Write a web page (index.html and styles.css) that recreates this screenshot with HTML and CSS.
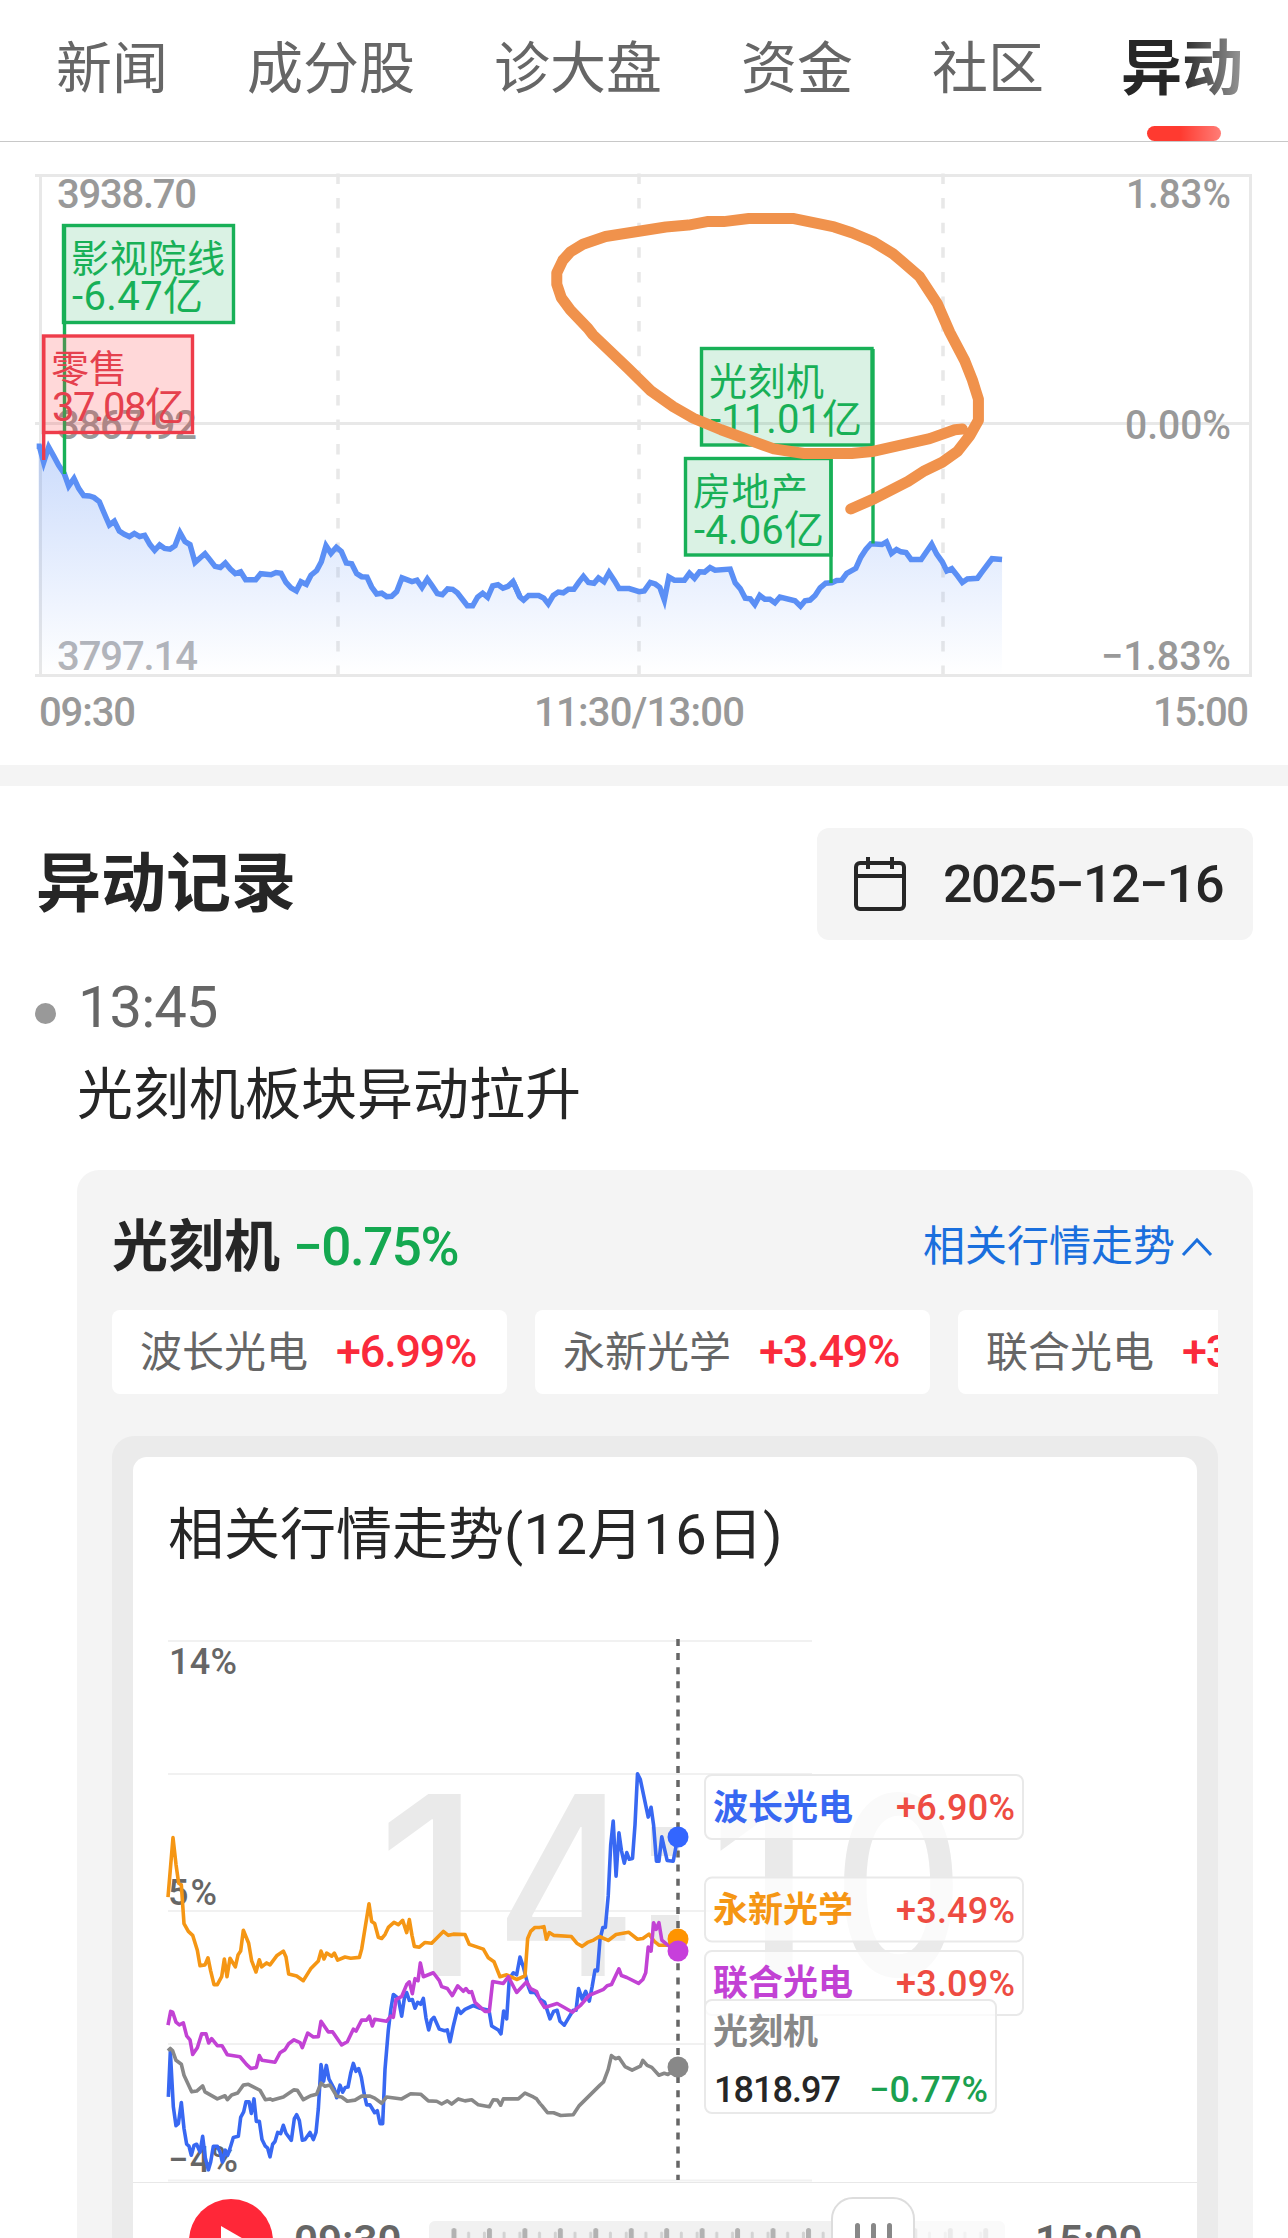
FILE: index.html
```html
<!DOCTYPE html>
<html lang="zh-CN">
<head>
    <meta charset="UTF-8">
    <title>异动</title>
    <link rel="stylesheet" href="styles.css">
</head>
<body>
    <nav class="tabs">
        <span class="tab">新闻</span>
        <span class="tab">成分股</span>
        <span class="tab">诊大盘</span>
        <span class="tab">资金</span>
        <span class="tab">社区</span>
        <span class="tab active">异动</span>
    </nav>

    <svg class="index-chart" viewBox="0 142 1288 623">
        <defs>
            <linearGradient id="area" gradientUnits="userSpaceOnUse" x1="0" y1="740" x2="0" y2="1345">
                <stop offset="0" stop-color="#5b8ff5" stop-opacity=".32"/>
                <stop offset="1" stop-color="#5b8ff5" stop-opacity="0"/>
            </linearGradient>
        </defs>
        <g class="frame">
            <path d="M35 175.5H1252M35 423.5H1252M35 675.5H1252M40.5 175V676M1250.5 175V676"/>
            <path class="dash" d="M338 173.500V676M639 173.500V676M943 173.500V676"/>
        </g>
        <g class="axis">
            <text x="57" y="208" textLength="140">3938.70</text>
            <text x="57" y="438.500" textLength="140">3867.92</text>
            <text x="57" y="670" textLength="141" class="low">3797.14</text>
            <text x="1126" y="208" textLength="105" lengthAdjust="spacingAndGlyphs">1.83%</text>
            <text x="1125" y="438.500" textLength="106" lengthAdjust="spacingAndGlyphs">0.00%</text>
            <text x="1101" y="670" textLength="130" lengthAdjust="spacingAndGlyphs">−1.83%</text>
            <text x="39" y="725.500" textLength="97">09:30</text>
            <text x="534" y="725.500" textLength="211">11:30/13:00</text>
            <text x="1153" y="725.500" textLength="96">15:00</text>
        </g>

        <!-- index line, morning and afternoon part -->
        <g transform="translate(0 160) scale(.33333 .38265)">
            <path fill="url(#area)" d="M116 748L131 790 146 750 193 820 206 852 222 832 236 858 251 877 268 878 282 882 298 893 312 922 328 954 343 944 358 970 373 978 388 984 403 976 419 984 434 981 450 1005 464 1020 479 1006 494 1015 510 1017 525 1008 540 974 555 997 570 1005 585 1052 600 1040 615 1029 630 1045 645 1062 661 1065 676 1053 691 1069 706 1081 722 1076 737 1097 767 1097 782 1081 813 1084 828 1078 843 1080 858 1104 873 1118 889 1126 903 1102 919 1109 933 1085 950 1073 964 1050 978 1008 993 1028 1009 1012 1024 1023 1039 1053 1055 1055 1070 1081 1085 1089 1101 1090 1115 1116 1130 1134 1145 1132 1160 1141 1175 1140 1190 1128 1206 1092 1236 1102 1251 1098 1266 1117 1282 1095 1296 1112 1312 1133 1327 1136 1343 1121 1358 1122 1372 1131 1387 1148 1402 1165 1418 1165 1433 1142 1448 1132 1463 1143 1478 1113 1494 1110 1509 1119 1524 1114 1539 1102 1560 1142V1345H116Z"/>
            <polyline class="index-line" points="110,748 118,748 131,790 146,750 162,775 176,798 193,820 206,852 222,832 236,858 251,877 268,878 282,882 298,893 312,922 328,954 343,944 358,970 373,978 388,984 403,976 419,984 434,981 450,1005 464,1020 479,1006 494,1015 510,1017 525,1008 540,974 555,997 570,1005 585,1052 600,1040 615,1029 630,1045 645,1062 661,1065 676,1053 691,1069 706,1081 722,1076 737,1097 767,1097 782,1081 813,1084 828,1078 843,1080 858,1104 873,1118 889,1126 903,1102 919,1109 933,1085 950,1073 964,1050 978,1008 993,1028 1009,1012 1024,1023 1039,1053 1055,1055 1070,1081 1085,1089 1101,1090 1115,1116 1130,1134 1145,1132 1160,1141 1175,1140 1190,1128 1206,1092 1236,1102 1251,1098 1266,1117 1282,1095 1296,1112 1312,1133 1327,1136 1343,1121 1358,1122 1372,1131 1387,1148 1402,1165 1418,1165 1433,1142 1448,1132 1463,1143 1478,1113 1494,1110 1509,1119 1524,1114 1539,1102 1560,1142"/>
        </g>
        <g transform="translate(500 160) scale(.50254 .38265)">
            <path fill="url(#area)" d="M39.8 1142L47 1150 57 1138 77 1138 87 1145 96 1160 106 1138 116 1129 126 1131 136 1122 147 1122 157 1103 166 1088 176 1104 187 1106 196 1092 207 1102 217 1078 228 1100 237 1120 257 1120 277 1128 287 1126 299 1104 318 1117 327 1150 336 1090 347 1098 367 1098 377 1080 387 1093 397 1076 418 1065 458 1069 468 1105 478 1120 488 1145 507 1162 517 1138 527 1148 537 1148 547 1157 557 1142 587 1152 598 1166 617 1150 637 1118 648 1106 680 1098 690 1080 708 1067 718 1038 738 1003 760 1005 769 998 779 1028 789 1018 808 1026 818 1044 838 1044 859 1004 889 1074 899 1068 920 1104 930 1095 950 1093 979 1042 999 1044V1345H39.8Z"/>
            <polyline class="index-line" points="26,1102 39.800,1142 47,1150 57,1138 77,1138 87,1145 96,1160 106,1138 116,1129 126,1131 136,1122 147,1122 157,1103 166,1088 176,1104 187,1106 196,1092 207,1102 217,1078 228,1100 237,1120 257,1120 277,1128 287,1126 299,1104 309,1108 318,1117 327,1150 336,1090 347,1098 367,1098 377,1080 387,1093 397,1076 407,1077 418,1065 428,1072 458,1069 468,1105 478,1120 488,1145 498,1147 507,1162 517,1138 527,1148 537,1148 547,1157 557,1142 587,1152 598,1166 607,1152 617,1150 627,1138 637,1118 648,1106 660,1105 670,1099 680,1098 690,1080 708,1067 718,1038 728,1018 738,1003 760,1005 769,998 779,1028 789,1018 798,1024 808,1026 818,1044 838,1044 859,1004 869,1030 880,1050 889,1074 899,1068 910,1086 920,1104 930,1095 950,1093 960,1075 979,1042 999,1044"/>
        </g>

        <g class="flag down">
            <path class="pole" d="M64.500 225V474"/>
            <rect x="63.500" y="225.500" width="170" height="97"/>
            <text x="71" y="272" textLength="154">影视院线</text>
            <text x="72" y="310" textLength="131">-6.47亿</text>
        </g>
        <g class="flag up">
            <path class="pole" d="M43.700 335V460"/>
            <rect x="43.500" y="336" width="149" height="96.500"/>
            <text x="51" y="382" textLength="76">零售</text>
            <text x="52" y="421" textLength="133">37.08亿</text>
        </g>
        <g class="flag down">
            <path class="pole" d="M873 349V543.500"/>
            <rect x="701.500" y="348.500" width="170.500" height="96.500"/>
            <text x="709" y="395" textLength="115">光刻机</text>
            <text x="710" y="432.500" textLength="152">-11.01亿</text>
        </g>
        <g class="flag down">
            <path class="pole" d="M831 458V583"/>
            <rect x="685.500" y="458.500" width="145.500" height="96.500"/>
            <text x="693" y="505" textLength="115">房地产</text>
            <text x="694" y="544" textLength="130">-4.06亿</text>
        </g>

        <!-- hand drawn marker -->
        <polyline class="marker" transform="translate(500 160) scale(.50254 .38265)" points="698,912 745,885 812,840 845,812 880,790 910,762 935,720 952,680 952,625 946,600 940,575 925,525 895,450 870,375 835,305 800,265 782,245 742,213 700,190 665,175 585,153 495,153 445,161 412,161 375,170 330,175 210,200 165,220 140,240 125,262 113,295 113,325 122,360 140,392 175,440 185,457 255,545 300,603 345,645 385,675 440,705 545,755 605,767 700,767 740,762 855,728 905,705 920,703"/>
    </svg>

    <section class="records">
        <header class="records-head">
            <h2>异动记录</h2>
            <div class="date">
                <svg class="calendar" viewBox="0 0 52 54">
                    <rect x="2" y="6" width="48" height="46" rx="4"/>
                    <path d="M2 19H50M14 0V12M38 0V12"/>
                </svg>
                <span>2025−12−16</span>
            </div>
        </header>

        <div class="time"><i class="dot"></i><span>13:45</span></div>
        <p class="headline">光刻机板块异动拉升</p>

        <div class="card">
            <div class="card-head">
                <b>光刻机</b>
                <span class="rate green">−0.75%</span>
                <a class="toggle">相关行情走势<svg viewBox="0 0 32 20"><path d="M2 18L16 3L30 18"/></svg></a>
            </div>
            <div class="chips">
                <div class="chip"><span>波长光电</span><em>+6.99%</em></div>
                <div class="chip"><span>永新光学</span><em>+3.49%</em></div>
                <div class="chip"><span>联合光电</span><em>+3.09%</em></div>
            </div>

            <div class="panel">
                <div class="panel-inner">
                    <h3>相关行情走势<span>(12</span>月<span>16</span>日<span>)</span></h3>
                    <svg class="trend-chart" viewBox="133 1600 1064 582">
                        <path class="grid" d="M168 1641H812M168 1774H812M168 1911H812M168 2044H812M168 2180.500H812"/>
                        <g class="watermark">
                            <text x="377" y="1975.500">1</text>
                            <text x="495" y="1975.500" textLength="142" lengthAdjust="spacingAndGlyphs">4</text>
                            <path d="M651 1827h28v29h-28zM651 1915h28v29h-28z"/>
                            <text x="709" y="1975.500">1</text>
                            <text x="833" y="1975.500" textLength="131" lengthAdjust="spacingAndGlyphs">0</text>
                        </g>
                        <g class="trend-axis">
                            <text x="169" y="1673.500" textLength="68">14%</text>
                            <text x="168" y="1905" textLength="49">5%</text>
                            <text x="168" y="2172" textLength="70">−4%</text>
                        </g>
                        <path class="cursor" d="M678 1639V2180"/>

                        <g class="lines" transform="translate(140 1620) scale(.33333 .39417)">
                            <polyline class="blue" points="85,1210 91,1095 100,1235 108,1283 115,1278 124,1224 132,1290 140,1330 147,1335 154,1358 162,1333 170,1330 180,1350 188,1310 196,1365 205,1395 212,1375 220,1335 232,1335 240,1350 247,1375 256,1345 263,1358 272,1335 280,1313 295,1310 302,1262 311,1248 318,1222 327,1222 334,1252 342,1215 349,1272 358,1272 366,1318 376,1335 383,1340 390,1362 398,1330 405,1323 413,1300 422,1303 430,1282 438,1302 454,1320 463,1265 470,1255 478,1270 487,1320 495,1318 510,1300 520,1318 528,1300 535,1240 543,1128 551,1170 559,1130 567,1165 583,1190 590,1212 600,1180 608,1198 616,1186 624,1185 632,1150 640,1125 648,1145 656,1138 664,1160 672,1200 680,1230 690,1230 697,1240 704,1250 712,1245 720,1278 728,1278 735,1140 745,1040 753,985 760,950 775,960 785,1005 793,960 800,945 808,965 817,963 825,985 833,970 842,975 850,960 858,1010 866,1040 874,1015 882,1008 898,1038 914,1042 922,1040 930,1070 940,1030 953,985 962,998 975,988 1000,978 1020,985 1047,990 1055,1030 1075,1040 1083,1050 1091,992 1100,1012 1108,910 1120,895 1130,900 1140,855 1150,880 1165,930 1172,945 1185,945 1200,962"/>
                            <polyline class="gray" points="84,1093 91,1087 98,1093 108,1117 124,1127 132,1155 155,1197 170,1195 188,1182 195,1197 232,1215 255,1207 262,1217 275,1205 293,1200 310,1180 325,1178 360,1193 376,1217 390,1215 398,1218 430,1210 462,1192 472,1193 490,1217 512,1207 530,1203 543,1175 555,1183 570,1180 590,1208 605,1210 622,1221 645,1218 665,1208 690,1208 704,1213 725,1226 740,1210 785,1215 812,1202 842,1203 865,1220 890,1221 905,1228 922,1220 935,1228 955,1215 975,1220 995,1217 1015,1230 1048,1235 1060,1217 1072,1218 1082,1231 1090,1215 1135,1215 1155,1200 1180,1210 1190,1215 1200,1227"/>
                            <polyline class="orange" points="84,703 99,552 108,620 116,668 124,672 132,770 145,790 158,800 172,838 180,877 195,875 204,857 212,890 222,925 232,925 245,905 253,860 261,905 270,858 286,880 294,850 302,840 310,787 326,820 335,865 348,893 358,862 365,880 380,870 390,875 410,852 430,840 438,855 446,898 470,903 490,915 512,885 535,865 543,840 552,860 560,845 575,853 583,845 593,863 615,855 632,858 658,856 665,835 687,720 695,765 704,770 715,805 725,808 735,798 745,780 762,767 775,773 788,762 800,793 808,760 816,800 823,828 838,830 855,818 875,820 910,790 925,800 940,797 975,798 988,823 1030,835 1045,857 1062,867 1080,905 1100,900 1130,912 1155,903 1163,808 1172,790 1185,780 1200,780"/>
                            <polyline class="purple" points="84,1028 92,993 98,995 108,1020 118,1027 130,1022 140,1055 150,1065 158,1102 172,1085 185,1050 198,1050 206,1073 215,1062 232,1080 246,1080 262,1103 300,1108 320,1128 333,1138 349,1135 358,1105 366,1117 405,1122 420,1098 435,1090 446,1075 462,1065 480,1072 487,1085 503,1048 520,1058 535,1057 543,1018 565,1045 578,1045 605,1078 622,1070 640,1038 648,1043 665,1015 680,1015 688,1005 697,1030 704,1013 740,1018 752,1005 760,1008 768,963 785,955 800,925 808,918 817,948 825,910 834,915 841,870 850,905 880,895 898,915 905,930 922,935 937,953 953,928 970,942 978,935 987,945 995,943 1005,970 1035,993 1048,993 1058,917 1090,922 1105,905 1130,945 1160,918 1172,935 1190,943 1200,965"/>
                        </g>
                        <g class="lines" transform="translate(500 1620) scale(.35714 .39417)">
                            <polyline class="blue" points="112,962 125,970 140,1012 150,993 160,990 168,1018 180,1028 195,1005 205,990 213,990 220,935 230,962 240,942 250,967 258,930 266,888 273,890 280,810 288,780 295,780 303,700 310,570 317,510 325,650 333,540 340,585 348,617 355,590 362,607 371,605 378,520 385,390 393,405 415,500 423,475 430,520 438,612 445,612 453,550 468,610 485,612 498,550"/>
                            <polyline class="gray" points="112,1227 120,1235 133,1250 150,1250 170,1257 205,1255 222,1232 280,1180 290,1172 303,1140 312,1105 323,1113 333,1110 350,1133 370,1142 393,1132 400,1117 412,1130 425,1135 445,1155 460,1150 470,1153 498,1135"/>
                            <polyline class="orange" points="112,780 123,778 130,810 138,793 150,800 200,803 215,820 230,828 245,818 262,812 278,803 303,813 325,798 360,792 385,810 400,808 417,797 432,815 445,825 470,825 498,808"/>
                            <polyline class="purple" points="112,965 125,983 160,973 180,983 203,995 225,978 250,952 290,937 300,928 312,925 333,885 340,902 355,907 388,922 400,912 408,895 415,830 423,840 430,768 437,785 445,768 453,812 470,825 498,840"/>
                        </g>
                        <circle cx="678" cy="1837" r="10.500" fill="#3366ff"/>
                        <circle cx="678" cy="1939" r="10.500" fill="#ff9400"/>
                        <circle cx="678" cy="1951" r="10.500" fill="#c73fdb"/>
                        <circle cx="678" cy="2067" r="10.500" fill="#888"/>

                        <g class="tip">
                            <rect x="705" y="1775" width="318" height="64" rx="7"/>
                            <text class="name" x="713" y="1820" fill="#3868f2">波长光电</text>
                            <text class="pct" x="896" y="1820" textLength="119">+6.90%</text>
                            <rect x="705" y="1877.500" width="318" height="64" rx="7"/>
                            <text class="name" x="713" y="1922" fill="#f59614">永新光学</text>
                            <text class="pct" x="896" y="1922.500" textLength="119">+3.49%</text>
                            <rect x="705" y="1951" width="318" height="64" rx="7"/>
                            <text class="name" x="713" y="1995" fill="#c242d4">联合光电</text>
                            <text class="pct" x="896" y="1996" textLength="119">+3.09%</text>
                            <rect x="705" y="2000" width="291" height="113" rx="7"/>
                            <text class="name" x="713" y="2044" fill="#888">光刻机</text>
                            <text class="price" x="714" y="2101.500" textLength="127">1818.97</text>
                            <text class="pct fall" x="869" y="2101.500" textLength="119">−0.77%</text>
                        </g>
                    </svg>

                    <div class="player">
                        <svg class="play" viewBox="0 0 84 84"><circle cx="42" cy="42" r="42"/><path d="M32 27L58 42L32 57Z"/></svg>
                        <span class="clock">09:30</span>
                        <div class="track">
                            <svg class="ruler" viewBox="0 0 576 39">
                                <defs>
                                    <pattern id="ticks" x="22.5" y="0" width="35.450" height="60" patternUnits="userSpaceOnUse">
                                        <rect x="0" y="7" width="5" height="50" rx="2.500" fill="#b2b2b2"/>
                                        <rect x="15.600" y="10.500" width="3" height="46" rx="1.500" fill="#d2d2d2"/>
                                        <rect x="31.400" y="10.500" width="3" height="46" rx="1.500" fill="#d2d2d2"/>
                                    </pattern>
                                </defs>
                                <rect width="440" height="39" fill="#f1f1f1"/>
                                <rect x="22" width="418" height="39" fill="url(#ticks)"/>
                                <rect x="440" width="120" height="39" fill="url(#ticks)" opacity=".22"/>
                            </svg>
                            <div class="handle"><i></i><i></i><i></i></div>
                        </div>
                        <span class="clock">15:00</span>
                    </div>
                </div>
            </div>
        </div>
    </section>
</body>
</html>
```

FILE: styles.css
```css
* {
    box-sizing: border-box;
}
body {
    margin: 0;
    width: 1288px;
    height: 2238px;
    overflow: hidden;
    background: #fff;
    color: #262626;
    font-family: Roboto, "Noto Sans CJK SC", sans-serif;
}
h2, h3, p {
    margin: 0;
}
svg {
    display: block;
}

/* tabs */
.tabs {
    position: relative;
    display: flex;
    align-items: center;
    gap: 79px;
    height: 142px;
    padding: 0 0 4px 56px;
    border-bottom: 1px solid #c8c8c8;
    font-size: 56px;
    line-height: 80px;
    color: #666;
    white-space: nowrap;
    overflow: hidden;
}
.tabs::after {
    content: "";
    position: absolute;
    top: 0;
    right: 0;
    width: 108px;
    height: 141px;
    background: linear-gradient(90deg, rgba(255, 255, 255, 0), rgba(255, 255, 255, .9));
}
.tab.active {
    position: relative;
    margin-left: -2px;
    font-size: 61px;
    font-weight: 700;
    color: #262626;
}
.tab.active::after {
    content: "";
    position: absolute;
    left: 26px;
    bottom: -32px;
    width: 74px;
    height: 15px;
    border-radius: 8px;
    background: #ff3a30;
}

/* index chart */
.index-chart {
    width: 1288px;
    height: 623px;
}
.frame path {
    fill: none;
    stroke: #e8e8e8;
    stroke-width: 3;
}
.frame .dash {
    stroke-width: 3.5;
    stroke-dasharray: 10.5 14.1;
}
.axis text {
    font-size: 40px;
    font-weight: 500;
    fill: #999;
}
.axis .low {
    fill: #b4b5b9;
}
.index-line {
    fill: none;
    stroke: #5b8ff5;
    stroke-width: 5.5;
    vector-effect: non-scaling-stroke;
}
.flag rect,
.flag .pole {
    stroke-width: 3.4;
}
.flag text {
    font-size: 38px;
}
.flag text + text {
    font-size: 40px;
}
.down rect,
.down .pole {
    stroke: #18b057;
    fill: rgba(24, 176, 87, .16);
}
.down text {
    fill: #18b057;
}
.up rect,
.up .pole {
    stroke: #ee3c4a;
    fill: rgba(255, 60, 65, .2);
}
.up text {
    fill: #e5404d;
}
.marker {
    fill: none;
    stroke: #f0924c;
    stroke-width: 11;
    stroke-linecap: round;
    stroke-linejoin: round;
    vector-effect: non-scaling-stroke;
}

/* records */
.records {
    border-top: 21px solid #f4f4f4;
    padding: 42px 35px 0 36px;
}
.records-head {
    display: flex;
    justify-content: space-between;
    align-items: center;
    height: 112px;
}
.records-head h2 {
    font-size: 65px;
    line-height: 90px;
}
.date {
    display: flex;
    align-items: center;
    gap: 37px;
    width: 436px;
    height: 112px;
    padding-left: 37px;
    border-radius: 12px;
    background: #f4f4f4;
    font-size: 52px;
    font-weight: 500;
    letter-spacing: -1.5px;
    white-space: nowrap;
}
.calendar {
    width: 52px;
    height: 54px;
    fill: none;
    stroke: #262626;
    stroke-width: 4;
}
.time {
    display: flex;
    align-items: center;
    gap: 22px;
    margin-top: 32px;
    height: 70px;
    font-size: 58px;
    letter-spacing: -1px;
    color: #666;
}
.dot {
    width: 21px;
    height: 21px;
    margin: 12px 0 0 -1px;
    border-radius: 50%;
    background: #999;
}
.headline {
    margin: 13px 0 0 41px;
    font-size: 56px;
    line-height: 80px;
}
.card {
    margin: 35px 0 0 41px;
    padding: 0 35px;
    border-radius: 22px 22px 0 0;
    background: #f4f4f4;
}
.card-head {
    display: flex;
    align-items: center;
    height: 140px;
    padding-top: 14px;
}
.card-head b {
    font-size: 56px;
    line-height: 80px;
    font-weight: 600;
}
.rate {
    margin-left: 13px;
    font-size: 53px;
    font-weight: 500;
    letter-spacing: -1.5px;
}
.green {
    color: #14a850;
}
.toggle {
    display: flex;
    align-items: center;
    gap: 6px;
    margin-left: auto;
    padding-right: 5px;
    font-size: 42px;
    line-height: 60px;
    color: #1a6fdd;
}
.toggle svg {
    width: 32px;
    height: 20px;
    fill: none;
    stroke: #1a6fdd;
    stroke-width: 3;
}
.chips {
    display: flex;
    gap: 28px;
    overflow: hidden;
}
.chip {
    display: flex;
    flex: none;
    align-items: center;
    width: 395px;
    height: 84px;
    padding: 0 0 2px 28px;
    gap: 28px;
    border-radius: 8px;
    background: #fff;
    color: #666;
    font-size: 42px;
}
.chip span {
    margin-top: -6px;
}
.chip em {
    font-size: 45px;
    font-style: normal;
    font-weight: 500;
    letter-spacing: -1.2px;
    color: #fa2a3b;
}
.panel {
    margin-top: 42px;
    padding: 21px 21px 0;
    border-radius: 22px 22px 0 0;
    background: #ebebeb;
}
.panel-inner {
    border-radius: 14px 14px 0 0;
    background: #fff;
}
.panel-inner h3 {
    height: 143px;
    padding: 38px 0 0 35px;
    font-size: 56px;
    font-weight: 400;
    line-height: 80px;
}
.panel-inner h3 span {
    letter-spacing: .4px;
}

/* trend chart */
.trend-chart {
    width: 1064px;
    height: 582px;
}
.grid {
    stroke: #f1f1f1;
    stroke-width: 2;
}
.watermark {
    fill: #eaeaea;
    font-family: Inter, sans-serif;
    font-size: 250px;
    font-weight: 500;
}
.trend-axis text {
    font-size: 36px;
    font-weight: 500;
    fill: #666;
}
.cursor {
    stroke: #666;
    stroke-width: 3.5;
    stroke-dasharray: 7 7.1;
}
.lines polyline {
    fill: none;
    stroke-width: 3.6;
    stroke-linejoin: round;
    vector-effect: non-scaling-stroke;
}
.lines .blue { stroke: #3868f2; }
.lines .gray { stroke: #888; }
.lines .orange { stroke: #f59614; }
.lines .purple { stroke: #c242d4; }
.tip rect {
    fill: rgba(255, 255, 255, .75);
    stroke: #e9e9e9;
    stroke-width: 2;
}
.tip .name {
    font-size: 35px;
    font-weight: 700;
}
.tip .pct,
.tip .price {
    font-size: 36px;
    font-weight: 500;
    fill: #ee4c42;
}
.tip .price {
    fill: #262626;
}
.tip .fall {
    fill: #1ba04f;
}

/* player */
.player {
    display: flex;
    align-items: center;
    height: 116px;
    padding-left: 56px;
    border-top: 1px solid #e8e8e8;
}
.play {
    width: 84px;
    height: 84px;
    fill: #ff2738;
}
.play path {
    fill: #fff;
}
.clock {
    width: 106px;
    margin-left: 21px;
    font-size: 42px;
    font-weight: 600;
    color: #666;
}
.track {
    position: relative;
    width: 576px;
    height: 39px;
    margin-left: 29px;
    border-radius: 6px;
    background: #fafafa;
}
.track + .clock {
    margin-left: 30px;
}
.ruler {
    width: 576px;
    height: 39px;
    border-radius: 6px;
}
.handle {
    position: absolute;
    left: 402px;
    top: -24px;
    display: flex;
    justify-content: center;
    gap: 11px;
    width: 84px;
    height: 84px;
    padding-top: 24px;
    border: 2px solid #ddd;
    border-radius: 22px;
    background: #fff;
}
.handle i {
    width: 5px;
    height: 34px;
    border-radius: 3px;
    background: #888;
}
```
